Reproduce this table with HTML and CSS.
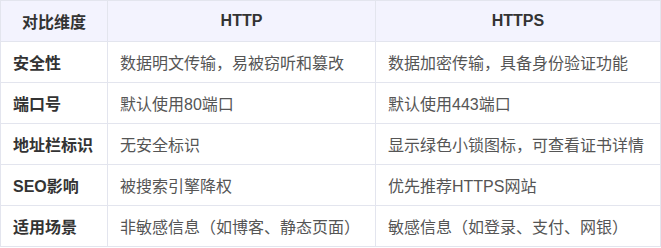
FILE: index.html
```html
<!DOCTYPE html>
<html lang="zh-CN">
<head>
<meta charset="utf-8">
<link rel="stylesheet" href="styles.css">
</head>
<body>
<table class="cmp">
  <colgroup>
    <col class="c1">
    <col class="c2">
    <col class="c3">
  </colgroup>
  <thead>
    <tr><th>对比维度</th><th>HTTP</th><th>HTTPS</th></tr>
  </thead>
  <tbody>
    <tr><td class="dim">安全性</td><td>数据明文传输，易被窃听和篡改</td><td>数据加密传输，具备身份验证功能</td></tr>
    <tr><td class="dim">端口号</td><td>默认使用80端口</td><td>默认使用443端口</td></tr>
    <tr><td class="dim">地址栏标识</td><td>无安全标识</td><td>显示绿色小锁图标，可查看证书详情</td></tr>
    <tr><td class="dim">SEO影响</td><td>被搜索引擎降权</td><td>优先推荐HTTPS网站</td></tr>
    <tr><td class="dim">适用场景</td><td>非敏感信息（如博客、静态页面）</td><td>敏感信息（如登录、支付、网银）</td></tr>
  </tbody>
</table>
</body>
</html>
```
FILE: styles.css
```css
html, body {
  margin: 0;
  padding: 0;
  background: #ffffff;
}
body {
  font-family: "Liberation Sans", "Noto Sans CJK SC", sans-serif;
  font-size: 16px;
}
.cmp {
  width: 660px;
  border-collapse: collapse;
  table-layout: fixed;
}
.c1 { width: 107px; }
.c2 { width: 268px; }
.c3 { width: 285px; }
.cmp th,
.cmp td {
  border: 1px solid #e3e5ee;
  height: 41px;
  padding: 0 12px;
  box-sizing: border-box;
  white-space: nowrap;
}
.cmp th {
  background: #f3f3fe;
  color: #333333;
  font-weight: bold;
  text-align: center;
}
.cmp td {
  color: #555555;
  text-align: left;
}
.cmp td.dim {
  color: #333333;
  font-weight: bold;
}
```
